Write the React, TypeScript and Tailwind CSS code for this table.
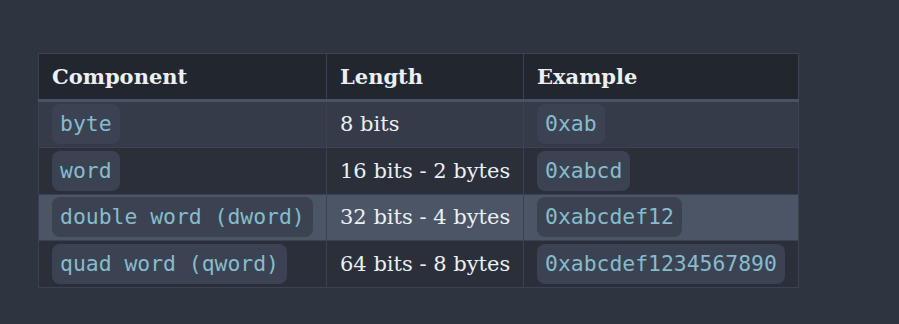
import React from "react"
import clsx from "clsx"

type Row = {
  name: string
  length: string
  example: string
}

const rows: Row[] = [
  { name: "byte", length: "8 bits", example: "0xab" },
  { name: "word", length: "16 bits - 2 bytes", example: "0xabcd" },
  { name: "double word (dword)", length: "32 bits - 4 bytes", example: "0xabcdef12" },
  { name: "quad word (qword)", length: "64 bits - 8 bytes", example: "0xabcdef1234567890" }
]

const rowBg = ["bg-[#353b48]", "bg-[#2a2f3a]", "bg-[#4c5566]", "bg-[#2a2f3a]"]

const Code: React.FC<{ children: React.ReactNode }> = ({ children }) => (
  <code className="inline-block whitespace-nowrap rounded-lg bg-[#3b4252] px-[8px] py-[6px] align-middle font-['DejaVu_Sans_Mono',monospace] text-[21.4px] leading-[28px] text-[#86bccc]">
    {children}
  </code>
)

const App: React.FC = () => {
  return (
    <div className="min-h-screen bg-[#2e3440] pl-[38px] pt-[53px] font-['DejaVu_Serif',serif] text-[21px] text-[#eceff4]">
      <table className="w-[760px] table-fixed border-collapse border border-[#3b4252]">
        <colgroup>
          <col className="w-[288px]" />
          <col className="w-[197px]" />
          <col className="w-[275px]" />
        </colgroup>
        <thead>
          <tr className="h-[47px] border-b-[3px] border-[#4a5263] bg-[#22262e]">
            {["Component", "Length", "Example"].map((title) => (
              <th
                key={title}
                className="border-r border-[#3b4252] px-[13px] text-left font-bold"
              >
                {title}
              </th>
            ))}
          </tr>
        </thead>
        <tbody>
          {rows.map((row, i) => (
            <tr key={row.name} className={clsx("h-[46.8px] border-b border-[#3b4252]", rowBg[i])}>
              <td className="border-r border-[#3b4252] px-[13px] py-0">
                <Code>{row.name}</Code>
              </td>
              <td className="whitespace-nowrap border-r border-[#3b4252] px-[13px] py-0 leading-[28px]">
                {row.length}
              </td>
              <td className="border-r border-[#3b4252] px-[13px] py-0">
                <Code>{row.example}</Code>
              </td>
            </tr>
          ))}
        </tbody>
      </table>
    </div>
  )
}

export default App
